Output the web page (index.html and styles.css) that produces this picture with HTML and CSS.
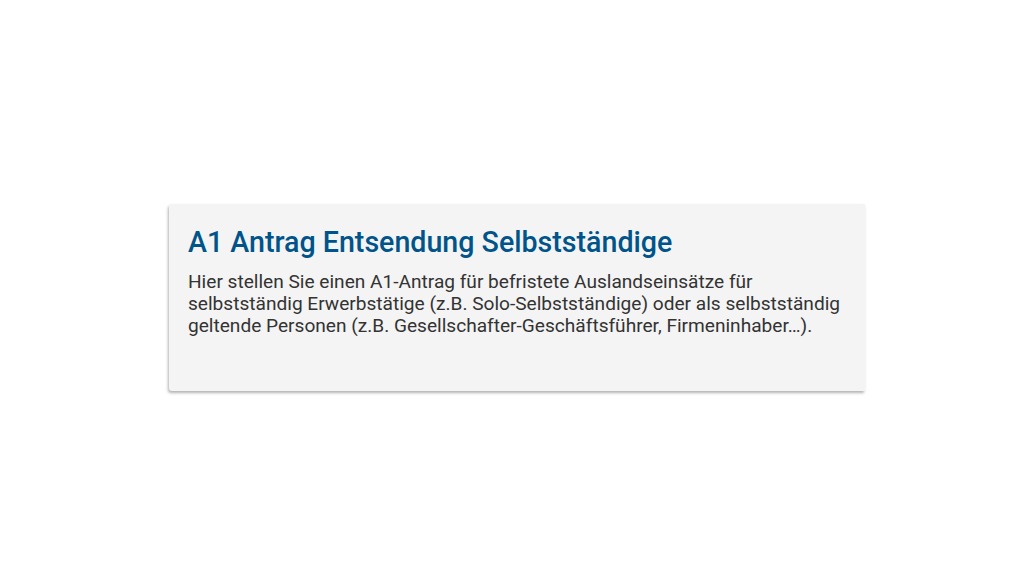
FILE: index.html
```html
<!DOCTYPE html>
<html lang="de">
<head>
<meta charset="utf-8">
<title>A1 Antrag Entsendung Selbstständige</title>
<link rel="stylesheet" href="styles.css">
</head>
<body>
<main class="page">
  <article class="card">
    <h2 class="card-title">A1 Antrag Entsendung Selbstständige</h2>
    <p class="card-text">Hier stellen Sie einen A1-Antrag für befristete Auslandseinsätze für selbstständig Erwerbstätige (z.B. Solo-Selbstständige) oder als selbstständig geltende Personen (z.B. Gesellschafter-Geschäftsführer, Firmeninhaber…).</p>
  </article>
</main>
</body>
</html>
```
FILE: styles.css
```css
html, body {
  margin: 0;
  padding: 0;
  background: #ffffff;
}
body {
  width: 1024px;
  height: 576px;
  overflow: hidden;
  font-family: Roboto, "Liberation Sans", sans-serif;
}
.page {
  padding: 204px 0 0 169px;
}
.card {
  box-sizing: border-box;
  width: 696px;
  height: 187px;
  background: #f4f4f4;
  border-radius: 3px 0 0 3px;
  box-shadow: -1px 2px 3px rgba(0, 0, 0, 0.3);
  padding: 20px 19px 0 19px;
}
.card-title {
  margin: 0;
  font-size: 28.6px;
  font-weight: 500;
  line-height: 36px;
  color: #00548a;
}
.card-text {
  margin: 11px 0 0 0;
  font-size: 19.1px;
  line-height: 22px;
  color: #333333;
  max-width: 660px;
}
```
